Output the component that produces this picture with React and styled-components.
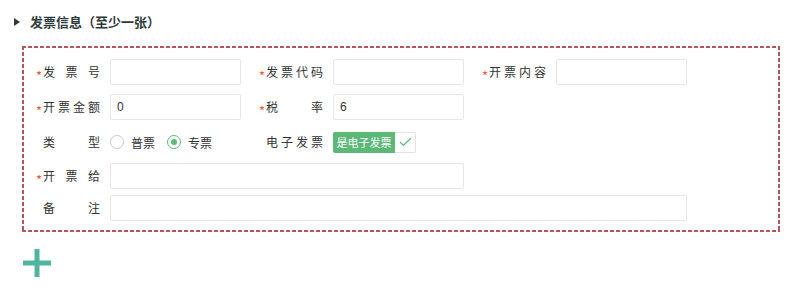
import styled, { createGlobalStyle } from "styled-components";

const GlobalStyle = createGlobalStyle`
  body {
    margin: 0;
    background: #fff;
    font-family: "Noto Sans CJK SC", "Noto Sans", sans-serif;
    color: #333;
  }
`;

const Page = styled.div`
  padding: 9px 20px 0 14px;
  width: 800px;
  box-sizing: border-box;
`;

const Title = styled.div`
  display: flex;
  align-items: center;
  height: 25px;
  font-size: 13px;
  font-weight: bold;
  color: #2f3b3b;
`;

const Arrow = styled.span`
  width: 0;
  height: 0;
  border-top: 4px solid transparent;
  border-bottom: 4px solid transparent;
  border-left: 6px solid #2f3b3b;
  margin-right: 10px;
`;

const dash = (dir) =>
  `repeating-linear-gradient(${dir}, #b4555a 0 4px, transparent 4px 6px)`;

const Box = styled.div`
  margin: 12px 0 0 8px;
  width: 758px;
  box-sizing: border-box;
  padding: 13px 13px 11px 15px;
  background:
    ${dash("90deg")} top left / 100% 2px no-repeat,
    ${dash("90deg")} bottom left / 100% 2px no-repeat,
    ${dash("180deg")} top left / 2px 100% no-repeat,
    ${dash("180deg")} top right / 2px 100% no-repeat;
`;

const Row = styled.div`
  display: flex;
  align-items: center;
  height: 26px;
  margin-top: ${(p) => p.$mt || 0}px;
  gap: 19px;
`;

const Field = styled.div`
  display: flex;
  align-items: center;
`;

const Star = styled.span`
  width: 6px;
  font-size: 13px;
  color: #f2582c;
  line-height: 1;
  margin-top: 6px;
  margin-left: -1px;
  margin-right: 1px;
`;

const LabelText = styled.span`
  width: 57px;
  margin-right: 10px;
  font-size: 12px;
  line-height: 16px;
  color: #333;
  text-align: justify;
  text-align-last: justify;
`;

const Input = styled.input`
  box-sizing: border-box;
  width: ${(p) => p.$w || 131}px;
  height: 26px;
  border: 1px solid #e8e8e8;
  border-radius: 2px;
  padding: 0 6px;
  font-family: "Liberation Sans", Arial, sans-serif;
  font-size: 12px;
  color: #333;
  outline: none;
`;

const Radios = styled.div`
  display: flex;
  align-items: center;
  width: 131px;
`;

const RadioOption = styled.label`
  display: flex;
  align-items: center;
  font-size: 12px;
  color: #333;
  margin-right: 12px;
`;

const Circle = styled.span`
  box-sizing: border-box;
  width: 14px;
  height: 14px;
  border-radius: 50%;
  border: 1px solid ${(p) => (p.$on ? "#5cb87a" : "#c8c8c8")};
  margin-right: 7px;
  display: flex;
  align-items: center;
  justify-content: center;
  &::after {
    content: "";
    width: 6px;
    height: 6px;
    border-radius: 50%;
    background: #5cb87a;
    display: ${(p) => (p.$on ? "block" : "none")};
  }
`;

const Toggle = styled.div`
  display: flex;
  height: 21px;
`;

const ToggleText = styled.span`
  display: flex;
  align-items: center;
  justify-content: center;
  width: 62px;
  background: #5cb877;
  color: #fff;
  font-size: 11px;
  border-radius: 2px 0 0 2px;
`;

const ToggleCheck = styled.span`
  box-sizing: border-box;
  width: 21px;
  display: flex;
  align-items: center;
  justify-content: center;
  border: 1px solid #e2e2e2;
  border-left: none;
  border-radius: 0 2px 2px 0;
`;

const AddButton = styled.button`
  margin: 17px 0 0 9px;
  padding: 0;
  border: none;
  background: none;
  width: 28px;
  height: 28px;
  display: block;
`;

function Label({ text, required }) {
  return (
    <>
      <Star>{required ? "*" : ""}</Star>
      <LabelText>{text}</LabelText>
    </>
  );
}

export default function App() {
  return (
    <Page>
      <GlobalStyle />
      <Title>
        <Arrow />
        发票信息（至少一张）
      </Title>
      <Box>
        <Row>
          <Field>
            <Label text="发票号" required />
            <Input />
          </Field>
          <Field>
            <Label text="发票代码" required />
            <Input />
          </Field>
          <Field>
            <Label text="开票内容" required />
            <Input />
          </Field>
        </Row>
        <Row $mt={9}>
          <Field>
            <Label text="开票金额" required />
            <Input defaultValue="0" />
          </Field>
          <Field>
            <Label text="税率" required />
            <Input defaultValue="6" />
          </Field>
        </Row>
        <Row $mt={9}>
          <Field>
            <Label text="类型" />
            <Radios>
              <RadioOption>
                <Circle />
                普票
              </RadioOption>
              <RadioOption>
                <Circle $on />
                专票
              </RadioOption>
            </Radios>
          </Field>
          <Field>
            <Label text="电子发票" />
            <Toggle>
              <ToggleText>是电子发票</ToggleText>
              <ToggleCheck>
                <svg width="13" height="10" viewBox="0 0 13 10">
                  <path d="M1 5 L4.5 8.5 L12 1" fill="none" stroke="#5cb877" strokeWidth="1.2" />
                </svg>
              </ToggleCheck>
            </Toggle>
          </Field>
        </Row>
        <Row $mt={8}>
          <Field>
            <Label text="开票给" required />
            <Input $w={354} />
          </Field>
        </Row>
        <Row $mt={6}>
          <Field>
            <Label text="备注" />
            <Input $w={577} />
          </Field>
        </Row>
      </Box>
      <AddButton aria-label="add">
        <svg width="28" height="28" viewBox="0 0 28 28">
          <path d="M14 0 V28 M0 14 H28" stroke="#4fb59f" strokeWidth="5" />
        </svg>
      </AddButton>
    </Page>
  );
}
